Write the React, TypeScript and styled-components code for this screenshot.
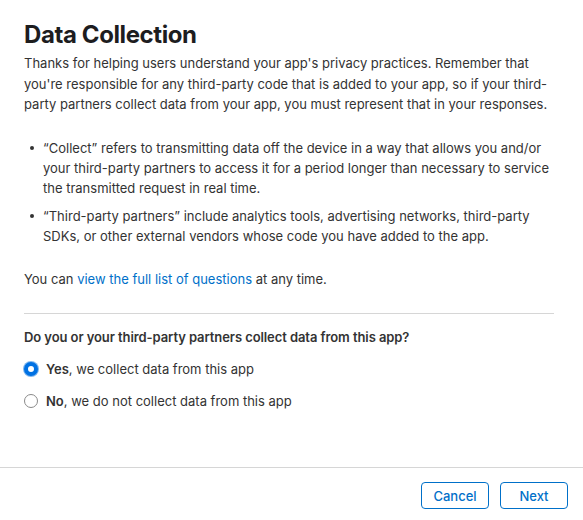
import React, { useState } from 'react'
import styled, { createGlobalStyle } from 'styled-components'

const GlobalStyle = createGlobalStyle`
  html, body {
    margin: 0;
    padding: 0;
    background: #fff;
  }
  body {
    font-family: Inter, "Noto Sans", "Liberation Sans", sans-serif;
    color: #333;
    -webkit-font-smoothing: antialiased;
  }
`

const StyledPage = styled.div`
  display: flex;
  flex-direction: column;
  width: 583px;
  height: 520px;
  box-sizing: border-box;
`

const StyledContent = styled.div`
  flex: 1;
  padding: 20px 29px 0 24px;
`

const StyledTitle = styled.h1`
  margin: 0 0 3px;
  font-size: 24px;
  line-height: 30px;
  font-weight: 700;
  color: #1d1d1f;
  letter-spacing: -0.4px;
`

const StyledText = styled.p<{ gap?: number }>`
  margin: 0 0 ${props => props.gap || 0}px;
  font-size: 13px;
  line-height: 20.5px;
  color: #333;
`

const StyledList = styled.ul`
  list-style: none;
  margin: 0 0 23px;
  padding: 0 0 0 19px;
  display: flex;
  flex-direction: column;
  gap: 8px;
`

const StyledItem = styled.li`
  position: relative;
  font-size: 13px;
  line-height: 20px;

  &::before {
    content: '';
    position: absolute;
    left: -13px;
    top: 8px;
    width: 4px;
    height: 4px;
    border-radius: 50%;
    background: #333;
  }
`

const StyledLink = styled.a`
  color: #0070c9;
  text-decoration: none;
  cursor: pointer;
`

const StyledDivider = styled.hr`
  margin: 0 0 13px;
  border: none;
  border-top: 1px solid #d6d6d6;
`

const StyledQuestion = styled.div`
  font-size: 13px;
  letter-spacing: -0.08px;
  line-height: 20px;
  font-weight: 600;
  color: #333;
  margin-bottom: 12px;
`

const StyledOptions = styled.div`
  display: flex;
  flex-direction: column;
  gap: 12px;
`

const StyledOption = styled.label`
  display: flex;
  align-items: center;
  gap: 8px;
  font-size: 13px;
  line-height: 20px;
  cursor: pointer;

  b {
    font-weight: 600;
  }
`

const StyledRadio = styled.span<{ checked: boolean }>`
  box-sizing: border-box;
  width: 14px;
  height: 14px;
  border-radius: 50%;
  border: ${props => (props.checked ? '4px solid #0071e3' : '1px solid #8a8a8a')};
  background: #fff;
  box-shadow: ${props => (props.checked ? '0 0 0 1px #7fb6ee' : 'none')};
`

const StyledFooter = styled.div`
  display: flex;
  justify-content: flex-end;
  gap: 11px;
  border-top: 1px solid #d6d6d6;
  padding: 14px 15px 11px;
`

const StyledButton = styled.button`
  width: 68px;
  height: 27px;
  border: 1px solid #0070c9;
  border-radius: 4px;
  background: #fff;
  color: #0070c9;
  font-family: inherit;
  font-size: 13px;
  font-weight: 500;
  cursor: pointer;
`

const App: React.FC = () => {
  const [collects, setCollects] = useState(true)

  return (
    <StyledPage>
      <GlobalStyle />
      <StyledContent>
        <StyledTitle>Data Collection</StyledTitle>
        <StyledText gap={23}>
          Thanks for helping users understand your app's privacy practices. Remember that you're responsible for
          any third-party code that is added to your app, so if your third-party partners collect data from your
          app, you must represent that in your responses.
        </StyledText>

        <StyledList>
          <StyledItem>
            “Collect” refers to transmitting data off the device in a way that allows you and/or your third-party
            partners to access it for a period longer than necessary to service the transmitted request in real
            time.
          </StyledItem>
          <StyledItem>
            “Third-party partners” include analytics tools, advertising networks, third-party SDKs, or other
            external vendors whose code you have added to the app.
          </StyledItem>
        </StyledList>

        <StyledText gap={24}>
          You can <StyledLink>view the full list of questions</StyledLink> at any time.
        </StyledText>

        <StyledDivider />

        <StyledQuestion>Do you or your third-party partners collect data from this app?</StyledQuestion>

        <StyledOptions>
          <StyledOption onClick={() => setCollects(true)}>
            <StyledRadio checked={collects} />
            <span>
              <b>Yes</b>, we collect data from this app
            </span>
          </StyledOption>
          <StyledOption onClick={() => setCollects(false)}>
            <StyledRadio checked={!collects} />
            <span>
              <b>No</b>, we do not collect data from this app
            </span>
          </StyledOption>
        </StyledOptions>
      </StyledContent>

      <StyledFooter>
        <StyledButton>Cancel</StyledButton>
        <StyledButton>Next</StyledButton>
      </StyledFooter>
    </StyledPage>
  )
}

export default App
